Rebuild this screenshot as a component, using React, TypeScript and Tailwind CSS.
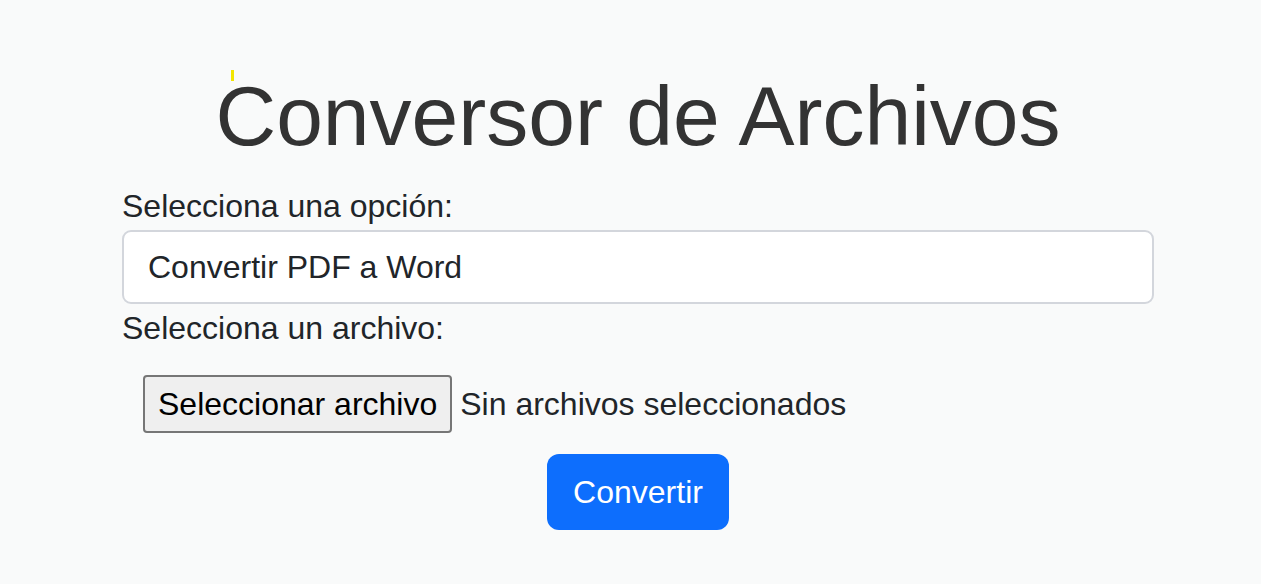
import React from "react";

const font = { fontFamily: '"Liberation Sans", Arial, sans-serif' };

export default function App() {
  return (
    <div
      className="relative min-h-screen bg-[#f9fafa] pl-[15px] text-[#212529]"
      style={font}
    >
      {/* stray caret mark */}
      <span className="absolute left-[231px] top-[70px] h-[11px] w-[3px] bg-[#f3e600]" />

      <div className="mx-auto w-[1032px] pt-[66px]">
        <h1 className="mb-[15px] text-center text-[84px] leading-[1.2] font-normal text-[#333333]">
          Conversor de Archivos
        </h1>

        <form className="flex flex-col">
          <label className="block text-[32px] leading-[48px]">
            Selecciona una opción:
          </label>
          <select
            className="h-[74px] w-full appearance-none rounded-[9px] border-2 border-[#d3d6dc] bg-white px-[24px] text-[32px] leading-[48px] text-[#212529]"
            style={font}
            defaultValue="pdf-word"
          >
            <option value="pdf-word">Convertir PDF a Word</option>
            <option value="word-pdf">Convertir Word a PDF</option>
          </select>

          <label className="block text-[32px] leading-[48px]">
            Selecciona un archivo:
          </label>

          <div className="ml-[21px] mt-[23px] flex items-center gap-[8px]">
            <button
              type="button"
              className="h-[58px] rounded-[4px] border-2 border-[#767676] bg-[#efefef] px-[13px] text-[32px] leading-none text-black"
              style={font}
            >
              Seleccionar archivo
            </button>
            <span className="text-[32px] leading-[48px]">
              Sin archivos seleccionados
            </span>
          </div>

          <div className="mt-[21px] flex justify-center">
            <button
              type="button"
              className="h-[76px] rounded-[12px] bg-[#0d6efd] px-[26px] text-[32px] leading-[48px] text-white"
              style={font}
            >
              Convertir
            </button>
          </div>
        </form>
      </div>
    </div>
  );
}
